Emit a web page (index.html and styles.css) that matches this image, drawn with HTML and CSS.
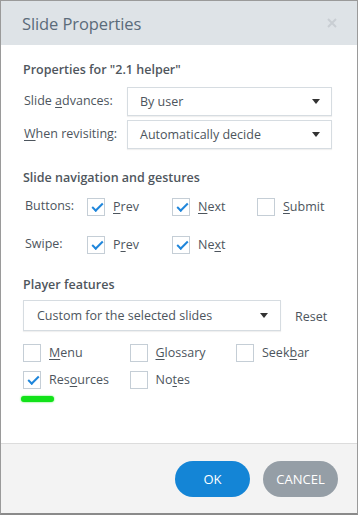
FILE: index.html
```html
<!DOCTYPE html>
<html>
<head>
<meta charset="utf-8">
<link rel="stylesheet" href="styles.css">
</head>
<body>
<div class="dialog">
  <div class="header">
    <div class="title">Slide Properties</div>
    <svg class="close" width="10" height="10" viewBox="0 0 10 10"><path d="M1 1L9 9M9 1L1 9" stroke="#c9ced3" stroke-width="2" fill="none"/></svg>
  </div>
  <div class="content">
    <div class="sec-title">Properties for "2.1 helper"</div>
    <div class="field first">
      <div class="flabel">Slide <u>a</u>dvances:</div>
      <div class="select wide"><span>By user</span><i class="arrow"></i></div>
    </div>
    <div class="field second">
      <div class="flabel"><u>W</u>hen revisiting:</div>
      <div class="select wide"><span>Automatically decide</span><i class="arrow"></i></div>
    </div>

    <div class="sec-title s2">Slide navigation and gestures</div>
    <div class="cbrow r1">
      <div class="rlabel">Buttons:</div>
      <div class="cb"><span class="box on"></span><span><u>P</u>rev</span></div>
      <div class="cb"><span class="box on"></span><span><u>N</u>ext</span></div>
      <div class="cb"><span class="box"></span><span><u>S</u>ubmit</span></div>
    </div>
    <div class="cbrow r2">
      <div class="rlabel">Swipe:</div>
      <div class="cb"><span class="box on"></span><span>P<u>r</u>ev</span></div>
      <div class="cb"><span class="box on"></span><span>Ne<u>x</u>t</span></div>
    </div>

    <div class="sec-title s3">Player features</div>
    <div class="prow">
      <div class="select pf"><span>Custom for the selected slides</span><i class="arrow"></i></div>
      <div class="reset">Reset</div>
    </div>
    <div class="feat f1">
      <div class="cb"><span class="box"></span><span><u>M</u>enu</span></div>
      <div class="cb"><span class="box"></span><span><u>G</u>lossary</span></div>
      <div class="cb"><span class="box"></span><span>Seek<u>b</u>ar</span></div>
    </div>
    <div class="feat f2">
      <div class="cb"><span class="box on"></span><span>Res<u>o</u>urces</span></div>
      <div class="cb"><span class="box"></span><span>No<u>t</u>es</span></div>
    </div>
    <div class="mark"></div>
  </div>
  <div class="footer">
    <button class="btn ok">OK</button>
    <button class="btn cancel">CANCEL</button>
  </div>
</div>
</body>
</html>
```

FILE: styles.css
```css
* { box-sizing: border-box; }
html, body { margin: 0; padding: 0; background: #fff; }
body {
  font-family: "Open Sans", "Noto Sans", sans-serif;
  font-size: 12.5px;
  color: #4d555d;
}
u { text-decoration: underline; text-underline-offset: 2px; text-decoration-thickness: 1px; }
.dialog {
  width: 358px;
  height: 515px;
  border: 1px solid #9a9a9a;
  border-bottom: 2px solid #8a8a8a;
  display: flex;
  flex-direction: column;
}
.header {
  height: 44px;
  background: #dee3e7;
  display: flex;
  align-items: center;
  justify-content: space-between;
  padding: 0 20px 0 21px;
}
.title {
  font-size: 16.5px;
  color: #5b6b7a;
  letter-spacing: -0.1px;
}
.close { display: block; }
.content {
  flex: 1;
  padding: 16px 0 0 22px;
  display: flex;
  flex-direction: column;
}
.sec-title {
  font-weight: 600;
  font-size: 12.5px;
  line-height: 18px;
  color: #4f565d;
}
.s2 { margin-top: 20px; }
.s3 { margin-top: 22px; }
.field {
  display: flex;
  align-items: center;
}
.field.first { margin-top: 8px; }
.field.second { margin-top: 4px; }
.flabel {
  width: 104px;
  padding-left: 1px;
  margin-top: -3px;
}
.select {
  height: 29px;
  border: 1px solid #d6dce1;
  box-shadow: 0 1px 1px rgba(0,0,0,0.06);
  display: flex;
  align-items: center;
  justify-content: space-between;
  padding: 0 11px 0 12px;
  color: #4d555d;
}
.select.wide { width: 205px; }
.arrow {
  width: 0; height: 0;
  border-left: 4px solid transparent;
  border-right: 4px solid transparent;
  border-top: 5px solid #333;
}
.cbrow {
  display: flex;
  align-items: flex-start;
}
.r1 { margin-top: 11px; }
.r2 { margin-top: 20px; }
.rlabel {
  width: 64px;
  padding-left: 2px;
  line-height: 16px;
}
.cb {
  display: flex;
  align-items: center;
  gap: 8px;
  width: 85px;
  line-height: 18px;
}
.box {
  width: 18px;
  height: 18px;
  border: 1px solid #c5ced6;
  background: #fff;
  position: relative;
  flex: none;
}
.box.on::after {
  content: "";
  position: absolute;
  left: 4px;
  top: 4px;
  width: 9px;
  height: 4px;
  border-left: 2px solid #1f86db;
  border-bottom: 2px solid #1f86db;
  transform: rotate(-45deg);
}
.prow {
  display: flex;
  align-items: center;
  margin-top: 6px;
}
.select.pf {
  width: 258px;
  height: 31px;
  padding-left: 13px;
  padding-right: 12px;
}
.reset {
  margin-left: 14px;
  margin-top: 2px;
}
.feat { display: flex; }
.feat .cb { width: 106.5px; }
.f1 { margin-top: 13px; }
.f2 { margin-top: 9px; }
.mark {
  margin-top: 7px;
  margin-left: -2px;
  width: 33px;
  height: 6px;
  border-radius: 3px;
  background: #12e21a;
  box-shadow: 0 0 2px #3cf03c;
}
.footer {
  height: 70px;
  border-top: 1px solid #dcdcdc;
  background: #f3f3f3;
  display: flex;
  justify-content: flex-end;
  align-items: center;
  gap: 13px;
  padding-right: 19px;
}
.btn {
  width: 75px;
  height: 36px;
  border: none;
  border-radius: 18px;
  font-family: inherit;
  font-size: 13px;
  color: #fff;
}
.ok { background: #1485d6; }
.cancel { background: #959ea6; }
```
